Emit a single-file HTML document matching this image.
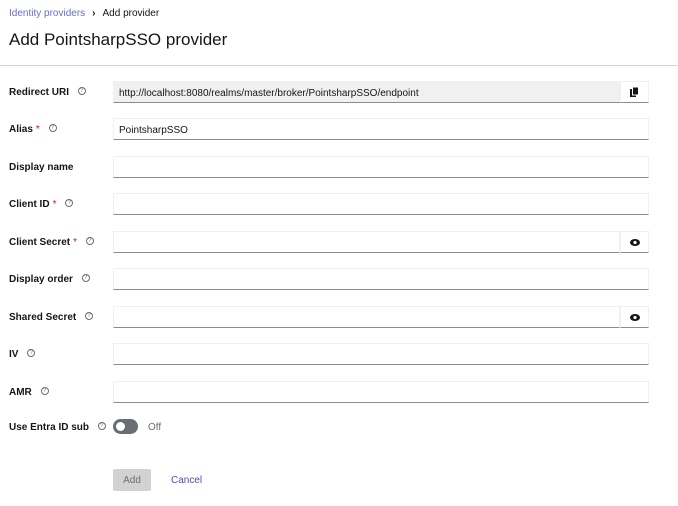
<!DOCTYPE html>
<html><head><meta charset="utf-8"><style>
*{box-sizing:border-box;margin:0;padding:0}
body{width:678px;height:506px;background:#fff;font-family:"Liberation Sans",sans-serif;color:#151515;position:relative;overflow:hidden}
.bc{position:absolute;left:9px;top:8px;font-size:10px;color:#151515}
.bc a{color:#6a6ec8;text-decoration:none}
.bc .sep{margin:0 7px;font-weight:bold}
h1{position:absolute;left:9px;top:30px;font-size:17px;font-weight:normal}
.hr{position:absolute;left:0;top:65px;width:678px;height:1px;background:#d2d2d2}
.row{position:absolute;left:0;width:678px;height:22px}
.lab{position:absolute;left:9px;top:6px;font-size:10px;font-weight:bold;line-height:11px}
.req{color:#c9190b;margin-left:3px;font-weight:normal}
.q{display:inline-block;width:8px;height:8px;border:1px solid #6a6e73;border-radius:50%;font-size:6px;line-height:6px;text-align:center;color:#6a6e73;margin-left:6px;vertical-align:middle;font-weight:normal;position:relative;top:-1px}
.inp{position:absolute;left:113px;top:0;width:536px;height:22px;border:1px solid #f0f0f0;border-bottom:1px solid #8a8d90;font-size:10px;padding:6px 5px 0}
.ro{background:#f0f0f0;width:508px}
.btn{position:absolute;left:620px;top:0;width:29px;height:22px;border:1px solid #f0f0f0;border-bottom:1px solid #8a8d90;display:flex;align-items:center;justify-content:center}
.pw{width:507px}
</style></head><body>
<div class="bc"><a>Identity providers</a><span class="sep">›</span>Add provider</div>
<h1>Add PointsharpSSO provider</h1>
<div class="hr"></div>
<div class="row" style="top:81px"><div class="lab">Redirect URI <span class="q">?</span></div><div class="inp ro">http://localhost:8080/realms/master/broker/PointsharpSSO/endpoint</div><div class="btn"><svg width="9" height="10" viewBox="0 0 9 10"><rect x="0" y="2" width="6" height="8" fill="#151515"/><rect x="2.5" y="0" width="6" height="8" fill="#151515" stroke="#fff" stroke-width="1"/></svg></div></div>
<div class="row" style="top:118px"><div class="lab">Alias<span class="req">*</span> <span class="q">?</span></div><div class="inp">PointsharpSSO</div></div>
<div class="row" style="top:156px"><div class="lab">Display name</div><div class="inp"></div></div>
<div class="row" style="top:193px"><div class="lab">Client ID<span class="req">*</span> <span class="q">?</span></div><div class="inp"></div></div>
<div class="row" style="top:231px"><div class="lab">Client Secret<span class="req">*</span> <span class="q">?</span></div><div class="inp pw"></div><div class="btn"><svg width="10" height="7" viewBox="0 0 10 7"><ellipse cx="5" cy="3.5" rx="5" ry="3.5" fill="#151515"/><circle cx="5" cy="3.5" r="1.6" fill="#fff"/></svg></div></div>
<div class="row" style="top:268px"><div class="lab">Display order <span class="q">?</span></div><div class="inp"></div></div>
<div class="row" style="top:306px"><div class="lab">Shared Secret <span class="q">?</span></div><div class="inp pw"></div><div class="btn"><svg width="10" height="7" viewBox="0 0 10 7"><ellipse cx="5" cy="3.5" rx="5" ry="3.5" fill="#151515"/><circle cx="5" cy="3.5" r="1.6" fill="#fff"/></svg></div></div>
<div class="row" style="top:343px"><div class="lab">IV <span class="q">?</span></div><div class="inp"></div></div>
<div class="row" style="top:381px"><div class="lab">AMR <span class="q">?</span></div><div class="inp"></div></div>
<div class="row" style="top:416px"><div class="lab">Use Entra ID sub <span class="q">?</span></div>
<div style="position:absolute;left:113px;top:3px;width:25px;height:15px;border-radius:8px;background:#6a6e73"><div style="position:absolute;left:3px;top:3px;width:9px;height:9px;border-radius:50%;background:#fff"></div></div>
<div style="position:absolute;left:148px;top:6px;font-size:10px;color:#6a6e73">Off</div></div>
<div style="position:absolute;left:113px;top:469px;width:38px;height:22px;background:#d2d2d2;border-radius:2px;color:#6a6e73;font-size:10px;text-align:center;line-height:23px">Add</div>
<div style="position:absolute;left:171px;top:475px;font-size:10px;color:#4a50b0">Cancel</div>
</body></html>
